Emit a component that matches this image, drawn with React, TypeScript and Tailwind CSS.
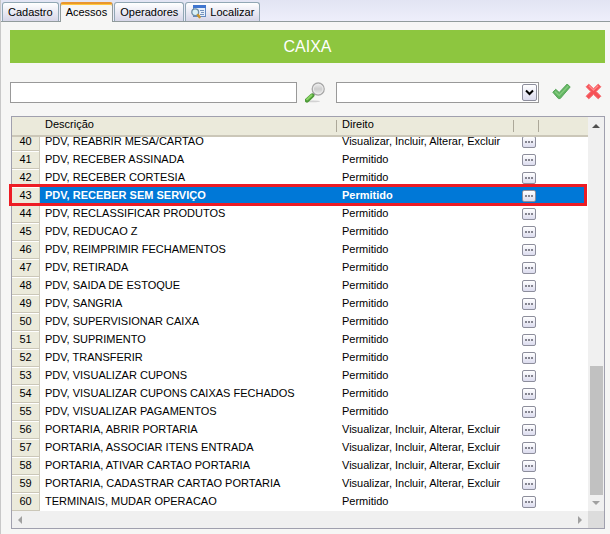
import { useState } from "react";

const FULL = "Visualizar, Incluir, Alterar, Excluir";
const ALLOWED = "Permitido";

type Access = { id: number; description: string; right: string };

const rows: Access[] = [
  { id: 40, description: "PDV, REABRIR MESA/CARTAO", right: FULL },
  { id: 41, description: "PDV, RECEBER ASSINADA", right: ALLOWED },
  { id: 42, description: "PDV, RECEBER CORTESIA", right: ALLOWED },
  { id: 43, description: "PDV, RECEBER SEM SERVIÇO", right: ALLOWED },
  { id: 44, description: "PDV, RECLASSIFICAR PRODUTOS", right: ALLOWED },
  { id: 45, description: "PDV, REDUCAO Z", right: ALLOWED },
  { id: 46, description: "PDV, REIMPRIMIR FECHAMENTOS", right: ALLOWED },
  { id: 47, description: "PDV, RETIRADA", right: ALLOWED },
  { id: 48, description: "PDV, SAIDA DE ESTOQUE", right: ALLOWED },
  { id: 49, description: "PDV, SANGRIA", right: ALLOWED },
  { id: 50, description: "PDV, SUPERVISIONAR CAIXA", right: ALLOWED },
  { id: 51, description: "PDV, SUPRIMENTO", right: ALLOWED },
  { id: 52, description: "PDV, TRANSFERIR", right: ALLOWED },
  { id: 53, description: "PDV, VISUALIZAR CUPONS", right: ALLOWED },
  { id: 54, description: "PDV, VISUALIZAR CUPONS CAIXAS FECHADOS", right: ALLOWED },
  { id: 55, description: "PDV, VISUALIZAR PAGAMENTOS", right: ALLOWED },
  { id: 56, description: "PORTARIA, ABRIR PORTARIA", right: FULL },
  { id: 57, description: "PORTARIA, ASSOCIAR ITENS ENTRADA", right: FULL },
  { id: 58, description: "PORTARIA, ATIVAR CARTAO PORTARIA", right: FULL },
  { id: 59, description: "PORTARIA, CADASTRAR CARTAO PORTARIA", right: FULL },
  { id: 60, description: "TERMINAIS, MUDAR OPERACAO", right: ALLOWED },
];

function FormSearchIcon() {
  return (
    <svg width="16" height="14" viewBox="0 0 16 14" aria-hidden="true">
      <rect x="2.5" y="0.5" width="12" height="11" fill="#e6effa" stroke="#6289c2" />
      <rect x="2" y="0" width="13" height="3" fill="#3f75cf" />
      <path d="M9 5.5h4M10 7.5h3M9 9.5h4" stroke="#7593bd" />
      <circle cx="4.2" cy="7.2" r="3.4" fill="#d9f0f5" stroke="#6f8ea5" strokeWidth="1.3" />
      <path d="M7 10.2l1.5 1.8" stroke="#c9952b" strokeWidth="2.6" strokeLinecap="round" />
    </svg>
  );
}

function MagnifierIcon() {
  return (
    <svg width="20" height="21" viewBox="0 0 20 21" aria-hidden="true">
      <defs>
        <linearGradient id="lens" x1="0" y1="0" x2="0" y2="1">
          <stop offset="0" stopColor="#f2f2f2" />
          <stop offset="0.5" stopColor="#cdcdcd" />
          <stop offset="1" stopColor="#efefef" />
        </linearGradient>
      </defs>
      <ellipse cx="8" cy="19.4" rx="7" ry="0.9" fill="#d2d2d2" />
      <path d="M9.8 11.2l-2 2" stroke="#8e8e8e" strokeWidth="2.4" />
      <path d="M7.2 13.5L2 18.4" stroke="#4d9a38" strokeWidth="4.4" strokeLinecap="round" />
      <path d="M6.6 13.2L2 17.4" stroke="#8ad465" strokeWidth="2" strokeLinecap="round" />
      <circle cx="13.2" cy="7" r="6" fill="url(#lens)" stroke="#a8a8a8" strokeWidth="1.3" />
      <circle cx="13.2" cy="7" r="4.8" fill="none" stroke="#ececec" />
    </svg>
  );
}

function CheckIcon() {
  return (
    <svg width="19" height="17" viewBox="0 0 19 17" aria-hidden="true">
      <path d="M0.8 9.2l2.9-2.9 3.5 3.2L15.2 1 18.2 4 8.2 15.6 6.4 15.6z" fill="#62b562" stroke="#55a457" strokeLinejoin="round" />
      <path d="M3 8.4l4.2 4L16.2 3" fill="none" stroke="#83ca7d" strokeWidth="1.5" />
    </svg>
  );
}

function CrossIcon() {
  return (
    <svg width="17" height="17" viewBox="0 0 18 18" aria-hidden="true">
      <path d="M4 1.2L9 6l5-4.8L16.8 4l-5 5 5 5-2.8 2.8L9 12l-5 4.8L1.2 14l5-5-5-5z" fill="#f65156" stroke="#f4676b" strokeLinejoin="round" />
      <path d="M4 3l5 4.6L14 3" fill="none" stroke="#ff898b" strokeWidth="1.4" />
    </svg>
  );
}

function Arrow({ direction }: { direction: "up" | "down" | "left" | "right" }) {
  const points = {
    up: "4,11 8,7 12,11",
    down: "4,6 8,10 12,6",
    left: "10,4 6,8 10,12",
    right: "6,4 10,8 6,12",
  }[direction];
  return (
    <svg width="16" height="16" viewBox="0 0 16 16" aria-hidden="true">
      <polygon points={points} fill={direction === "up" ? "#505050" : "#a0a0a0"} />
    </svg>
  );
}

const tabs = ["Cadastro", "Acessos", "Operadores", "Localizar"];

function Tabs({ active, onChange }: { active: string; onChange: (tab: string) => void }) {
  return (
    <div role="tablist" className="flex h-[22px] items-end gap-px border-b border-[#919b9c] bg-linear-to-b from-[#e2e4f3] to-[#eeeffb] px-px pt-0.5">
      {tabs.map((tab) => (
        <button
          key={tab}
          type="button"
          role="tab"
          aria-selected={tab === active}
          onClick={() => onChange(tab)}
          className={
            tab === active
              ? "-mb-px flex h-5 items-center rounded-t-[3px] border-x border-t-2 border-x-[#919b9c] border-t-[#e8962e] bg-[#f6f6f5] px-[5px] pb-px whitespace-nowrap shadow-[inset_0_1px_0_#ffc83c]"
              : "flex h-[19px] items-center gap-[3px] rounded-t-[3px] border border-b-0 border-[#91a7b4] bg-linear-to-b from-white to-[#d6d6e8] px-[5px] whitespace-nowrap"
          }
        >
          {tab === "Localizar" && <FormSearchIcon />}
          {tab}
        </button>
      ))}
    </div>
  );
}

function Header({ label }: { label: string }) {
  return (
    <th scope="col" className="h-5 border-b-2 border-[#cbc7b8] bg-[#ebeadb] p-0 text-left align-top font-normal">
      <div className="mt-[3px] h-3 border-r border-[#aca899] pl-[5px] leading-[8px] whitespace-nowrap">{label}</div>
    </th>
  );
}

function Row({ item, short, selected, onSelect }: { item: Access; short: boolean; selected: boolean; onSelect: () => void }) {
  const line = short ? "flex h-3.5 items-start leading-[8px]" : "flex h-[18px] items-start leading-4";
  return (
    <tr onClick={onSelect} className={selected ? "relative bg-[#0078d7] font-bold text-white" : "bg-white"}>
      <th scope="row" className="border-r border-b border-[#cbc7b8] bg-[#ebeadb] p-0 font-normal text-black">
        <div className={short ? "flex h-[13px] items-start justify-center leading-[8px]" : "flex h-[17px] items-end justify-center border-t border-white leading-[17px]"}>
          {item.id}
        </div>
        {selected && <span className="pointer-events-none absolute -top-[3px] right-px -bottom-px -left-[3px] border-3 border-[#ed1c24]" />}
      </th>
      <td className="p-0">
        <div className={line}>
          <span className="pl-[5px] whitespace-nowrap">{item.description}</span>
        </div>
      </td>
      <td className="p-0">
        <div className={line}>
          <span className="pl-[5px] whitespace-nowrap">{item.right}</span>
        </div>
      </td>
      <td className="p-0">
        <div className={short ? "flex h-3.5 items-end overflow-hidden" : "flex h-[18px] items-end"}>
          <button
            type="button"
            aria-label={`Editar ${item.description}`}
            className="mb-[3px] ml-2 flex h-3 w-3.5 shrink-0 items-center justify-center gap-px rounded-[2px] border border-[#8d8e9c] bg-linear-to-b from-white to-[#dcdcee]"
          >
            <i className="size-0.5 bg-[#858590]" />
            <i className="size-0.5 bg-[#858590]" />
            <i className="size-0.5 bg-[#858590]" />
          </button>
        </div>
      </td>
      <td className="border-r border-white p-0" />
    </tr>
  );
}

export default function App() {
  const [tab, setTab] = useState("Acessos");
  const [selected, setSelected] = useState(43);

  return (
    <main className="border-l border-[#c8c8c8] bg-[#f6f6f5] pb-[5px] font-['Liberation_Sans',Arial,sans-serif] text-[11px] text-black">
      <Tabs active={tab} onChange={setTab} />
      <div className="pt-2 pr-[5px] pl-[9px]">
        <h1 className="bg-[#8dc63f] text-center text-base leading-[33px] text-white">CAIXA</h1>

        <div className="mt-[15px] flex h-[29px] items-center">
          <div className="h-[21px] flex-[287]">
            <input aria-label="Pesquisar" className="size-full border border-[#999999] bg-white px-1 outline-none" />
          </div>
          <button type="button" aria-label="Buscar" className="mr-[11px] ml-2 shrink-0">
            <MagnifierIcon />
          </button>
          <div className="relative h-[21px] flex-[203]">
            <select aria-label="Direito" className="size-full appearance-none border border-[#999999] bg-white px-1 outline-none" />
            <span className="pointer-events-none absolute top-0.5 right-0.5 flex h-[17px] w-[15px] items-center justify-center rounded-[2px] border border-[#8d8e9c] bg-linear-to-b from-white to-[#dcdcee]">
              <svg width="9" height="7" viewBox="0 0 9 7" aria-hidden="true">
                <path d="M1 1.5l3.5 3.5L8 1.5" fill="none" stroke="black" strokeWidth="2" />
              </svg>
            </span>
          </div>
          <button type="button" aria-label="Confirmar" className="ml-[13px] shrink-0 pb-0.5">
            <CheckIcon />
          </button>
          <button type="button" aria-label="Cancelar" className="mr-[3px] ml-3.5 shrink-0 pb-0.5">
            <CrossIcon />
          </button>
        </div>

        <div className="mt-[9px] ml-px border border-[#a0a0ae] bg-[#f0f0f0]">
          <div className="flex">
            <table className="min-w-0 flex-1 table-fixed border-separate border-spacing-0">
              <colgroup>
                <col className="w-7" />
                <col />
                <col className="w-[177px]" />
                <col className="w-[25px]" />
                <col className="w-[49px]" />
              </colgroup>
              <thead>
                <tr>
                  <th className="border-b-2 border-[#cbc7b8] bg-[#ebeadb] p-0" />
                  <Header label="Descrição" />
                  <Header label="Direito" />
                  <Header label="" />
                  <th className="border-b-2 border-[#cbc7b8] bg-[#ebeadb] p-0" />
                </tr>
              </thead>
              <tbody>
                {rows.map((item, index) => (
                  <Row key={item.id} item={item} short={index === 0} selected={item.id === selected} onSelect={() => setSelected(item.id)} />
                ))}
              </tbody>
            </table>
            <div className="flex w-4 shrink-0 flex-col items-center">
              <button type="button" aria-label="Rolar para cima">
                <Arrow direction="up" />
              </button>
              <div className="flex-1" />
              <div className="h-[129px] w-[13px] bg-[#c1c1c1]" />
              <button type="button" aria-label="Rolar para baixo">
                <Arrow direction="down" />
              </button>
            </div>
          </div>
          <div className="flex h-[17px] items-center">
            <button type="button" aria-label="Rolar para a esquerda">
              <Arrow direction="left" />
            </button>
            <div className="flex-1" />
            <button type="button" aria-label="Rolar para a direita">
              <Arrow direction="right" />
            </button>
            <div className="h-full w-4 bg-[#dcdcdc]" />
          </div>
        </div>
      </div>
    </main>
  );
}
